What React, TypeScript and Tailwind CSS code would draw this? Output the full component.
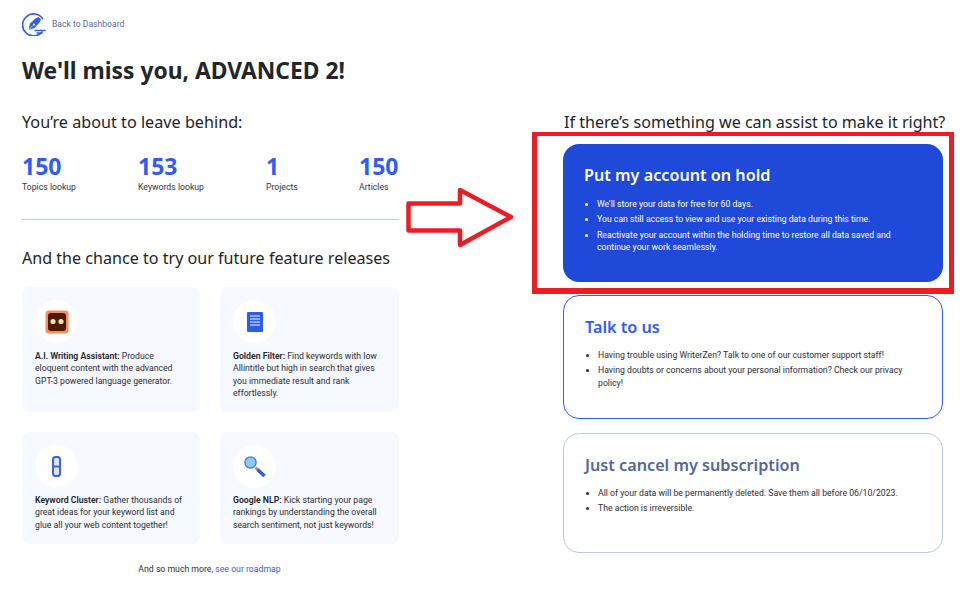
const stats = [
  { value: '150', label: 'Topics lookup', width: 'w-[116px]' },
  { value: '153', label: 'Keywords lookup', width: 'w-[128px]' },
  { value: '1', label: 'Projects', width: 'w-[93px]' },
  { value: '150', label: 'Articles', width: 'w-[40px]' },
];

function Logo() {
  return (
    <svg width="24" height="24" viewBox="0 0 24 24" fill="none">
      <path d="M20.5 6.5A11 11 0 1 0 20 20" stroke="#2f5bea" strokeWidth="1.6" strokeLinecap="round" />
      <path d="M6.5 18l1.5-6.5 5.5-5 3-1.5 2.5 2.5-1.5 3-5 5.5z" fill="#2f5bea" />
      <circle cx="12" cy="12.5" r="1.1" fill="#fff" />
      <path d="M6.5 18l4.7-4.7" stroke="#fff" strokeWidth="0.7" />
      <path d="M13 18.5h10M15 21h5" stroke="#2f5bea" strokeWidth="1.3" strokeLinecap="round" />
    </svg>
  );
}

function RobotIcon() {
  return (
    <svg width="24" height="24" viewBox="0 0 24 24">
      <rect x="0.5" y="0.5" width="23" height="23" rx="3.5" fill="#ff8a5c" />
      <rect x="3" y="3" width="18" height="18" rx="3" fill="#4a1a0a" />
      <circle cx="8" cy="11.5" r="2.6" fill="#ffe2a8" />
      <circle cx="16" cy="11.5" r="2.6" fill="#ffe2a8" />
    </svg>
  );
}

function DocIcon() {
  return (
    <svg width="16" height="20" viewBox="0 0 16 20">
      <rect width="16" height="20" rx="1" fill="#2f5bea" />
      <path d="M3 4h10M3 7h10M3 10h10M3 13h10" stroke="#a8cdf5" strokeWidth="1.5" />
    </svg>
  );
}

function ClusterIcon() {
  return (
    <svg width="9" height="21" viewBox="0 0 9 21" fill="none">
      <rect x="1" y="1" width="7" height="19" rx="2.5" stroke="#3862e8" strokeWidth="2" fill="#dbe6fd" />
      <path d="M1 10.5h7" stroke="#3862e8" strokeWidth="2" />
    </svg>
  );
}

function SearchIcon() {
  return (
    <svg width="22" height="22" viewBox="0 0 22 22">
      <path d="M11.5 11.5l3 3" stroke="#b08a78" strokeWidth="2.5" />
      <path d="M13.5 13.5l7 6.5" stroke="#2f5bea" strokeWidth="3.4" />
      <circle cx="6.5" cy="6.5" r="5.6" fill="#8ec9fb" stroke="#4c74d8" strokeWidth="1.3" />
    </svg>
  );
}

function FeatureCard({ icon, title, text, box, textGap }: { icon: React.ReactNode; title: string; text: string; box: string; textGap: string }) {
  return (
    <div className={`${box} rounded-lg bg-[#f6f9ff] pl-[13px] pr-[14px] pt-[13px]`}>
      <div className="flex h-[43px] w-[43px] items-center justify-center rounded-full bg-white">{icon}</div>
      <p className={`${textGap} font-['Roboto',sans-serif] text-[8.7px] leading-[12.3px] text-[#2d2d35]`}>
        <span className="font-semibold text-[#1f2027]">{title}</span> {text}
      </p>
    </div>
  );
}

function OptionCard({ title, items, box, titleColor, itemColor, height, listGap }: { title: string; items: string[]; box: string; titleColor: string; itemColor: string; height: string; listGap: string }) {
  return (
    <div className={`w-[380px] ${height} rounded-2xl ${box} pl-[21px] pr-[30px] pt-[19px]`}>
      <h3 className={`text-[16.2px] font-semibold leading-6 ${titleColor}`}>{title}</h3>
      <ul className={`${listGap} list-disc pl-[13px] font-['Roboto',sans-serif] text-[8.7px] leading-[12.3px] ${itemColor}`}>
        {items.map((item) => (
          <li key={item} className="mb-[3px]">{item}</li>
        ))}
      </ul>
    </div>
  );
}

export default function App() {
  return (
    <div className="relative h-[598px] w-[972px] overflow-hidden bg-white font-['Noto_Sans',sans-serif] text-[#212529]">
      <div className="flex justify-between pl-[22px] pr-[29px]">
        {/* Left column */}
        <div className="w-[377px] pt-[12px]">
          <div className="flex items-center gap-[6px]">
            <Logo />
            <a className="mt-px font-['Roboto',sans-serif] text-[8.6px] text-[#5a6aa0]">Back to Dashboard</a>
          </div>
          <h1 className="mt-[19px] text-[22.8px] font-bold leading-8 text-[#22252a]">We'll miss you, ADVANCED 2!</h1>
          <h2 className="mt-[23px] whitespace-nowrap text-[16.2px] leading-6">You’re about to leave behind:</h2>
          <div className="mt-[19px] flex">
            {stats.map((s) => (
              <div key={s.label} className={s.width}>
                <div className="text-[23px] font-bold leading-[26px] text-[#2f5bff]">{s.value}</div>
                <div className="mt-px whitespace-nowrap font-['Roboto',sans-serif] text-[8.7px] leading-[14px] text-[#33363d]">{s.label}</div>
              </div>
            ))}
          </div>
          <div className="mt-[25px] h-px bg-[#c0c8d4]" />
          <h2 className="mt-[26px] whitespace-nowrap text-[16.1px] leading-6">And the chance to try our future feature releases</h2>
          <div className="mt-[17px] flex flex-wrap justify-between gap-y-5">
            <FeatureCard box="h-[125px] w-[178px]" textGap="mt-[7px]" icon={<RobotIcon />} title="A.I. Writing Assistant:" text="Produce eloquent content with the advanced GPT-3 powered language generator." />
            <FeatureCard box="h-[125px] w-[179px]" textGap="mt-[7px]" icon={<DocIcon />} title="Golden Filter:" text="Find keywords with low Allintitle but high in search that gives you immediate result and rank effortlessly." />
            <FeatureCard box="h-[112px] w-[178px]" textGap="mt-[6px]" icon={<ClusterIcon />} title="Keyword Cluster:" text="Gather thousands of great ideas for your keyword list and glue all your web content together!" />
            <FeatureCard box="h-[112px] w-[179px]" textGap="mt-[6px]" icon={<SearchIcon />} title="Google NLP:" text="Kick starting your page rankings by understanding the overall search sentiment, not just keywords!" />
          </div>
          <p className="mt-[19px] pr-[2px] text-center font-['Roboto',sans-serif] text-[8.7px] leading-[13px] text-[#2d2d35]">
            And so much more, <a className="text-[#3a5be0]">see our roadmap</a>
          </p>
        </div>
        {/* Right column */}
        <div className="w-[380px] pt-[110px]">
          <h2 className="whitespace-nowrap pl-px text-[16.1px] leading-6">If there’s something we can assist to make it right?</h2>
          <div className="mt-[10px] flex flex-col">
            <OptionCard
              height="h-[138px]"
              listGap="mt-[11px]"
              box="bg-[#1f49d8]"
              titleColor="text-white"
              itemColor="text-white"
              title="Put my account on hold"
              items={[
                'We’ll store your data for free for 60 days.',
                'You can still access to view and use your existing data during this time.',
                'Reactivate your account within the holding time to restore all data saved and continue your work seamlessly.',
              ]}
            />
            <div className="mt-[13px]">
              <OptionCard
                height="h-[124px]"
                listGap="mt-[10px]"
                box="border border-[#2f5bff]"
                titleColor="text-[#2f5bff]"
                itemColor="text-[#2d2d35]"
                title="Talk to us"
                items={[
                  'Having trouble using WriterZen? Talk to one of our customer support staff!',
                  'Having doubts or concerns about your personal information? Check our privacy policy!',
                ]}
              />
            </div>
            <div className="mt-[14px]">
              <OptionCard
                height="h-[120px]"
                listGap="mt-[10px]"
                box="border border-[#bcc8e0]"
                titleColor="text-[#52689c]"
                itemColor="text-[#2d2d35]"
                title="Just cancel my subscription"
                items={[
                  'All of your data will be permanently deleted. Save them all before 06/10/2023.',
                  'The action is irreversible.',
                ]}
              />
            </div>
          </div>
        </div>
      </div>

      {/* Red annotation box and arrow drawn over the page */}
      <div className="absolute left-[532px] top-[132px] h-[162px] w-[422px] border-[5px] border-b-[6px] border-t-4 border-[#ed1c24]" />
      <svg className="absolute left-[405px] top-[186px]" width="110" height="62" viewBox="0 0 110 62" fill="none">
        <path d="M3.5 17.5H55V4L106 31 55 59V44.5H3.5z" stroke="#ed1c24" strokeWidth="4.5" strokeLinejoin="round" />
      </svg>
    </div>
  );
}
